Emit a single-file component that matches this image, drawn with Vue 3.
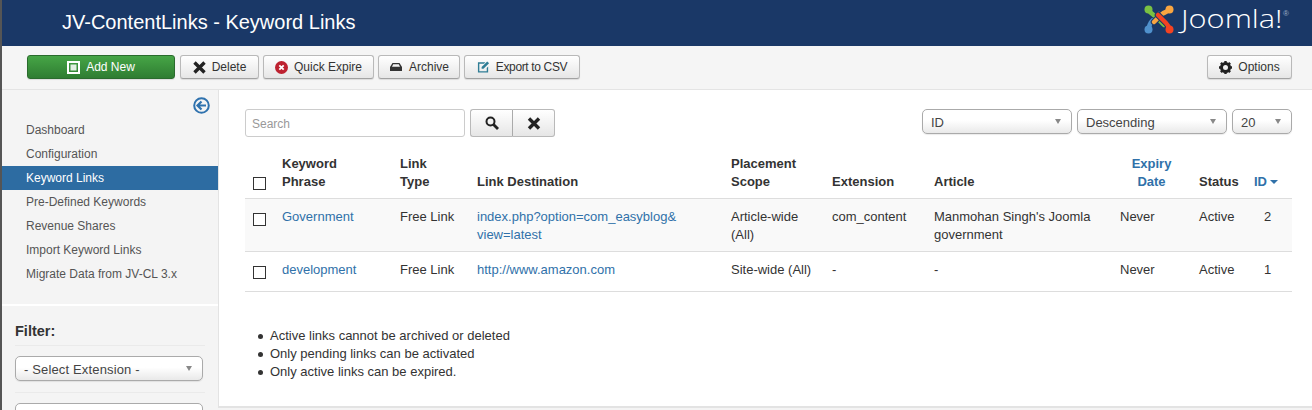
<script setup>
const nav = ['Dashboard', 'Configuration', 'Keyword Links', 'Pre-Defined Keywords', 'Revenue Shares', 'Import Keyword Links', 'Migrate Data from JV-CL 3.x']
</script>

<template>
  <div class="page">
    <header class="top">
      <h1>JV-ContentLinks - Keyword Links</h1>
      <div class="logo">
        <svg class="mark" width="30" height="29" viewBox="0 0 30 29" fill="none" stroke-linecap="round" stroke-linejoin="round">
          <g stroke="#1a3867" stroke-width="6.500"><path d="M15 9 L8 16 C6 18 5 21 4.500 24.500" /></g>
          <path stroke="#5091cd" stroke-width="4.500" d="M15 9 L8 16 C6 18 5 21 4.500 24.500" />
          <g stroke="#1a3867" stroke-width="6.500"><path d="M4.500 4.500 C6 8 8 9 11 11 L20 20" /></g>
          <path stroke="#7ac143" stroke-width="4.500" d="M4.500 4.500 C6 8 8 9 11 11 L20 20" />
          <g stroke="#1a3867" stroke-width="6.500"><path d="M25.500 4.500 C24 6.500 21 7 18 9 L10 17" /></g>
          <path stroke="#f9a541" stroke-width="4.500" d="M25.500 4.500 C24 6.500 21 7 18 9 L10 17" />
          <g stroke="#1a3867" stroke-width="6.500"><path d="M25.500 24.500 C25 22 24 20 22 18 L14 10" /></g>
          <path stroke="#f44321" stroke-width="4.500" d="M25.500 24.500 C25 22 24 20 22 18 L14 10" />
          <circle cx="4.500" cy="4.500" r="4" fill="#7ac143" />
          <circle cx="25.500" cy="4.500" r="4" fill="#f9a541" />
          <circle cx="4.500" cy="24.500" r="4" fill="#5091cd" />
          <circle cx="25.500" cy="24.500" r="4" fill="#f44321" />
        </svg>
        <span class="logobox"><span class="logotext">Joomla!</span></span><span class="reg">®</span>
      </div>
    </header>

    <div class="toolbar">
      <button class="btn green">
        <svg width="13" height="13" viewBox="0 0 13 13"><path fill="#fff" fill-rule="evenodd" d="M0 0h13v13H0zM2 2v9h9V2z" /><rect x="3.500" y="3.500" width="6" height="6" fill="#e3efe3" /></svg>
        Add New
      </button>
      <button class="btn b-del">
        <svg width="13" height="13" viewBox="0 0 13 13"><path stroke="#222" stroke-width="3.400" d="M1.500 1.500 11.500 11.500M11.500 1.500 1.500 11.500" /></svg>
        Delete
      </button>
      <button class="btn b-quick">
        <svg width="13" height="13" viewBox="0 0 13 13"><circle cx="6.500" cy="6.500" r="6.500" fill="#bd2130" /><path stroke="#fff" stroke-width="1.800" d="M4.300 4.300 8.700 8.700M8.700 4.300 4.300 8.700" /></svg>
        Quick Expire
      </button>
      <button class="btn b-arch">
        <svg width="14" height="10" viewBox="0 0 14 10"><path fill="#333" d="M3.500 1h7L13 5v4H1V5zM4.200 2.300 3 4.700h8L9.800 2.300z" /></svg>
        Archive
      </button>
      <button class="btn b-exp">
        <svg width="13" height="14" viewBox="0 0 14 14"><path fill="#2f7d95" d="M1 2h8L7.500 3.500H2.500v8h8V8L12 6.500V13H1z" /><path fill="#2f7d95" d="M5 7 11 1l2 2-6 6H5z" /></svg>
        Export to CSV
      </button>
      <button class="btn options">
        <svg width="13" height="13" viewBox="0 0 13 13"><circle cx="6.500" cy="6.500" r="4" fill="none" stroke="#222" stroke-width="3" /><path stroke="#222" stroke-width="2.400" d="M6.500 0v2.500M6.500 10.500V13M0 6.500h2.500M10.500 6.500H13M1.900 1.900l1.800 1.800M9.300 9.300l1.800 1.800M1.900 11.100l1.800-1.800M9.300 3.700l1.800-1.800" /></svg>
        Options
      </button>
    </div>

    <div class="body">
      <aside class="side">
        <div class="collapse">
          <svg width="17" height="17" viewBox="0 0 17 17"><circle cx="8.500" cy="8.500" r="7.300" fill="none" stroke="#2f72ae" stroke-width="2" /><path fill="none" stroke="#2f72ae" stroke-width="2.200" d="M8.500 4.500 4.500 8.500 8.500 12.500M5 8.500h8" /></svg>
        </div>
        <ul class="nav">
          <li v-for="n in nav" :key="n" :class="{ active: n === 'Keyword Links' }">{{ n }}</li>
        </ul>
        <div class="rule"></div>
        <div class="filter">
          <div class="ftitle">Filter:</div>
          <div class="thin"></div>
          <div class="select full">- Select Extension -<i></i></div>
          <div class="thin second"></div>
          <div class="select full"></div>
        </div>
      </aside>

      <main class="main">
        <div class="tools">
          <input class="search" placeholder="Search" />
          <div class="group">
            <button class="gbtn">
              <svg width="14" height="14" viewBox="0 0 14 14" fill="none" stroke="#222"><circle cx="5.500" cy="5.500" r="4" stroke-width="2" /><path stroke-width="2.800" d="M8.500 8.500 13 13" /></svg>
            </button>
            <button class="gbtn">
              <svg width="14" height="13" viewBox="0 0 14 13"><path stroke="#222" stroke-width="3.400" d="M2 1.500 12 11.500M12 1.500 2 11.500" /></svg>
            </button>
          </div>
          <div class="spacer"></div>
          <div class="select w150">ID<i></i></div>
          <div class="select w150">Descending<i></i></div>
          <div class="select w60">20<i></i></div>
        </div>

        <table>
          <colgroup>
            <col class="c1" /><col class="c2" /><col class="c3" /><col class="c4" /><col class="c5" />
            <col class="c6" /><col class="c7" /><col class="c8" /><col class="c9" /><col class="c10" />
          </colgroup>
          <thead>
            <tr>
              <th><span class="cb"></span></th>
              <th>Keyword<br />Phrase</th>
              <th>Link<br />Type</th>
              <th>Link Destination</th>
              <th>Placement<br />Scope</th>
              <th>Extension</th>
              <th>Article</th>
              <th class="ctr"><a>Expiry<br />Date</a></th>
              <th>Status</th>
              <th><a>ID</a><span class="caret"></span></th>
            </tr>
          </thead>
          <tbody>
            <tr class="odd">
              <td><span class="cb"></span></td>
              <td><a>Government</a></td>
              <td>Free Link</td>
              <td><a>index.php?option=com_easyblog&amp;<br />view=latest</a></td>
              <td>Article-wide<br />(All)</td>
              <td>com_content</td>
              <td>Manmohan Singh's Joomla<br />government</td>
              <td>Never</td>
              <td>Active</td>
              <td class="num">2</td>
            </tr>
            <tr>
              <td><span class="cb"></span></td>
              <td><a>development</a></td>
              <td>Free Link</td>
              <td><a>http://www.amazon.com</a></td>
              <td>Site-wide (All)</td>
              <td>-</td>
              <td>-</td>
              <td>Never</td>
              <td>Active</td>
              <td class="num">1</td>
            </tr>
          </tbody>
        </table>

        <ul class="notes">
          <li>Active links cannot be archived or deleted</li>
          <li>Only pending links can be activated</li>
          <li>Only active links can be expired.</li>
        </ul>
      </main>
    </div>
  </div>
</template>

<style>
html, body { margin: 0; background: #fff; overflow: hidden; }
</style>

<style scoped>
.page { width: 1312px; height: 410px; overflow: hidden; font-family: "Liberation Sans", Arial, sans-serif; font-size: 13px; line-height: 18px; color: #333; background: #f4f4f4; border-left: 2px solid #555; box-sizing: border-box; }
.top { height: 46px; background: #1a3867; display: flex; align-items: flex-start; justify-content: space-between; padding: 0 23px 0 60px; }
h1 { margin: 0; font-size: 20px; font-weight: 400; color: #fff; line-height: 24px; padding-top: 10px; }
.logo { display: flex; align-items: flex-start; color: #fff; padding-top: 5px; }
.logobox { display: block; width: 102px; height: 28px; margin-left: 7px; }
.logotext { display: inline-block; font-family: "Open Sans", sans-serif; font-weight: 300; font-size: 25px; line-height: 26px; transform: scaleX(1.23); transform-origin: left top; }
.reg { font-size: 8px; color: #9fb0c6; line-height: 12px; margin-top: 3px; }
.toolbar { height: 44px; box-sizing: border-box; display: flex; align-items: flex-start; gap: 4px; padding: 9px 20px 0 25px; border-bottom: 1px solid #e4e4e4; background: #f5f5f5; }
.btn { height: 24px; box-sizing: border-box; border: 1px solid #b9b9b9; border-bottom-color: #a2a2a2; border-radius: 3px; background: linear-gradient(#fff, #e6e6e6); font: 12px "Liberation Sans", Arial, sans-serif; color: #333; padding: 0; display: flex; align-items: center; justify-content: center; gap: 6px; box-shadow: 0 1px 1px rgba(0,0,0,.1); }
.green { width: 148px; margin-right: 1px; background: linear-gradient(#46a546, #2f7d32); border-color: #2a6b2d; color: #fff; }
.b-del { width: 79px; }
.b-quick { width: 111px; }
.b-arch { width: 82px; }
.b-exp { width: 116px; letter-spacing: -.35px; }
.options { width: 85px; margin-left: auto; }
.body { display: flex; height: 320px; }
.side { width: 216px; flex: none; background: #f4f4f4; box-sizing: border-box; font-size: 12px; }
.collapse { display: flex; justify-content: flex-end; padding: 7px 8px 0 0; height: 28px; box-sizing: border-box; }
.nav { list-style: none; margin: 0; padding: 0; }
.nav li { height: 24px; line-height: 25px; padding-left: 24px; color: #555; }
.nav li.active { background: #2d6ca2; color: #fff; }
.rule { height: 2px; background: #fff; margin-top: 18px; }
.filter { padding: 16px 13px 0; }
.ftitle { font-weight: 700; font-size: 14.500px; line-height: 18px; color: #333; padding-bottom: 5px; }
.thin { height: 1px; background: #eaeaea; margin-bottom: 10px; }
.thin.second { margin: 11px 0 10px; }
.select { height: 25px; box-sizing: border-box; border: 1px solid #aaa; border-radius: 5px; background: linear-gradient(#fff 45%, #e9e9e9); color: #444; line-height: 25px; padding-left: 8px; position: relative; font-size: 13px; box-shadow: 0 1px 1px rgba(0,0,0,.08); }
.select i { position: absolute; right: 10px; top: 9px; border: 3.500px solid transparent; border-top: 5px solid #888; border-bottom: 0; }
.full { width: 188px; letter-spacing: .15px; }
.w150 { width: 150px; }
.w60 { width: 60px; }
.main { flex: 1; background: #fff; border-left: 1px solid #e3e3e3; border-bottom: 2px solid #e3e3e3; padding: 19px 20px 0 26px; box-sizing: border-box; height: 318px; }
.tools { display: flex; align-items: flex-start; gap: 5px; }
.search { width: 220px; height: 28px; box-sizing: border-box; border: 1px solid #ccc; border-radius: 3px; padding: 2px 6px 0; font: 12px "Liberation Sans", Arial, sans-serif; outline: none; }
.search::placeholder { color: #999; opacity: 1; }
.group { display: flex; }
.gbtn { width: 43px; height: 28px; border: 1px solid #b9b9b9; background: linear-gradient(#fff, #e6e6e6); display: flex; align-items: center; justify-content: center; padding: 0; box-sizing: border-box; }
.gbtn:first-child { border-radius: 3px 0 0 3px; border-right-color: #aaa; }
.gbtn:last-child { width: 42px; border-radius: 0 3px 3px 0; border-left: 0; }
.spacer { flex: 1; }
table { border-collapse: collapse; table-layout: fixed; width: 1047px; margin-top: 10px; }
.c1 { width: 32px; } .c2 { width: 118px; } .c3 { width: 77px; } .c4 { width: 254px; } .c5 { width: 101px; }
.c6 { width: 102px; } .c7 { width: 186px; } .c8 { width: 79px; } .c9 { width: 55px; } .c10 { width: 43px; }
th { font-weight: 700; text-align: left; vertical-align: bottom; padding: 8px 5px 7px; border-bottom: 1px solid #ddd; color: #333; white-space: nowrap; }
td { padding: 9px 5px 7px; vertical-align: top; border-bottom: 1px solid #ddd; white-space: nowrap; }
tbody tr:last-child td { padding-bottom: 12px; }
.ctr { text-align: center; padding-right: 11px; }
.num { padding-left: 15px; }
tr.odd td { background: #f9f9f9; }
a { color: #3071a9; text-decoration: none; }
.cb { display: block; width: 11px; height: 11px; border: 1px solid #333; background: #fff; margin: 5px 0 0 3px; }
th .cb { margin-bottom: 1px; }
.caret { display: inline-block; border: 4px solid transparent; border-top: 4px solid #3071a9; border-bottom: 0; margin-left: 3px; vertical-align: 2px; }
.notes { list-style: none; margin: 35px 0 0; padding: 0 0 0 25px; }
.notes li { position: relative; }
.notes li::before { content: ""; position: absolute; left: -12px; top: 7px; width: 5px; height: 5px; border-radius: 50%; background: #333; }
</style>
